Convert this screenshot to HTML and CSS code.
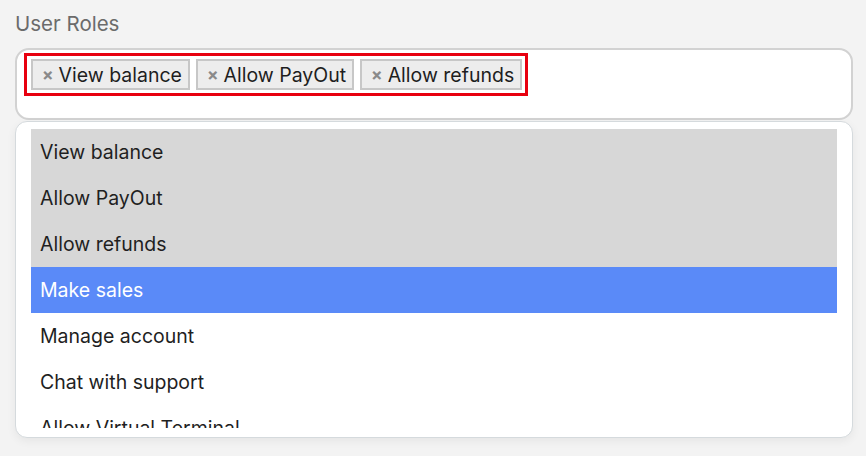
FILE: index.html
```html
<!DOCTYPE html>
<html lang="en">
<head>
<meta charset="utf-8">
<title>User Roles</title>
<link rel="stylesheet" href="styles.css">
</head>
<body>
<div class="field">
  <label class="field-label">User Roles</label>
  <div class="select-box">
    <ul class="tag-list">
      <li class="tag"><span class="tag-remove">×</span><span class="tag-text">View balance</span></li>
      <li class="tag"><span class="tag-remove">×</span><span class="tag-text">Allow PayOut</span></li>
      <li class="tag"><span class="tag-remove">×</span><span class="tag-text">Allow refunds</span></li>
    </ul>
  </div>
  <div class="dropdown">
    <ul class="options">
      <li class="option selected">View balance</li>
      <li class="option selected">Allow PayOut</li>
      <li class="option selected">Allow refunds</li>
      <li class="option active">Make sales</li>
      <li class="option">Manage account</li>
      <li class="option">Chat with support</li>
      <li class="option">Allow Virtual Terminal</li>
    </ul>
  </div>
</div>
</body>
</html>
```
FILE: styles.css
```css
* { box-sizing: border-box; }
html, body { margin: 0; padding: 0; }
body {
  background: #f3f3f3;
  font-family: Inter, "Noto Sans", sans-serif;
  width: 866px;
  height: 456px;
  overflow: hidden;
}
.field {
  padding: 11px 13px 0 15px;
}
.field-label {
  display: block;
  font-size: 20.5px;
  line-height: 25px;
  color: #6b6b6b;
  margin-bottom: 12px;
}
.select-box {
  height: 72px;
  background: #fff;
  border: 2px solid #d2d2d2;
  border-radius: 14px;
  padding: 3px 7px;
}
.tag-list {
  display: inline-flex;
  gap: 6px;
  margin: 0;
  padding: 3px 3px 3px 4px;
  list-style: none;
  border: 3px solid #e8000f;
}
.tag {
  display: flex;
  align-items: center;
  height: 31px;
  padding: 0 6px 0 9px;
  background: #ededed;
  border: 2px solid #c7c7c7;
  font-size: 19.5px;
  color: #1e1e1e;
}
.tag-remove {
  color: #8a8a8a;
  font-weight: 700;
  font-size: 17px;
  margin-right: 5px;
}
.dropdown {
  margin-top: 1px;
  background: #fff;
  border: 1.5px solid #d5dadd;
  border-radius: 12px;
  padding: 7px 15px 9px;
  box-shadow: 0 3px 10px rgba(0, 0, 0, 0.06);
}
.options {
  margin: 0;
  padding: 0;
  list-style: none;
  height: 299px;
  overflow: hidden;
}
.option {
  height: 46px;
  line-height: 46px;
  padding-left: 9px;
  font-size: 19.5px;
  color: #1f1f1f;
}
.option.selected { background: #d7d7d7; }
.option.active { background: #5a8af8; color: #fff; }
```
